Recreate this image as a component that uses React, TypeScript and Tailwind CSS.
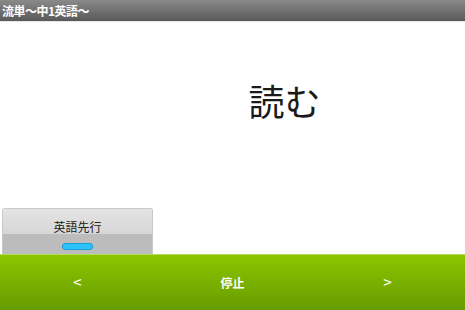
import React from 'react';

const jp = { fontFamily: '"Noto Sans CJK JP", "Noto Sans", sans-serif' };

const App: React.FC = () => {
  return (
    <div className="w-[465px] h-[310px] flex flex-col bg-white overflow-hidden" style={jp}>
      {/* Title bar */}
      <div className="h-[22px] flex items-center px-[2px] bg-gradient-to-b from-[#8a8a8a] to-[#595959] border-b border-[#e6e6e6]">
        <span className="text-white text-[12px] font-bold leading-none tracking-[-0.5px]">流単〜中1英語〜</span>
      </div>

      {/* Word area */}
      <div className="flex-1 flex flex-col">
        <div className="h-[156px] flex items-center justify-center pl-[104px]">
          <span className="text-[36px] leading-none text-[#1a1a1a]">読む</span>
        </div>

        {/* Toggle button */}
        <div className="mt-auto pl-[2px]">
          <div className="w-[151px] h-[46px] flex flex-col rounded-t-[3px] border border-b-0 border-[#c8c8c8] overflow-hidden">
            <div className="h-[25px] flex items-end justify-center bg-gradient-to-b from-[#e4e4e4] to-[#d6d6d6]">
              <span className="text-[12px] leading-none text-[#222] pb-[1px]">英語先行</span>
            </div>
            <div className="flex-1 flex justify-center pt-[9px] bg-[#bcbcbc]">
              <div className="w-[31px] h-[7px] rounded-[3px] bg-[#2ec2fa] border border-[#1a9fd8]" />
            </div>
          </div>
        </div>
      </div>

      {/* Bottom bar */}
      <div className="h-[56px] flex items-center bg-gradient-to-b from-[#8cc500] to-[#679c00] border-t border-[#b4dc5a] text-white">
        <div className="w-[155px] flex justify-center text-[15px]">&lt;</div>
        <div className="w-[155px] flex justify-center text-[12px] font-bold">停止</div>
        <div className="w-[155px] flex justify-center text-[15px]">&gt;</div>
      </div>
    </div>
  );
};

export default App;
